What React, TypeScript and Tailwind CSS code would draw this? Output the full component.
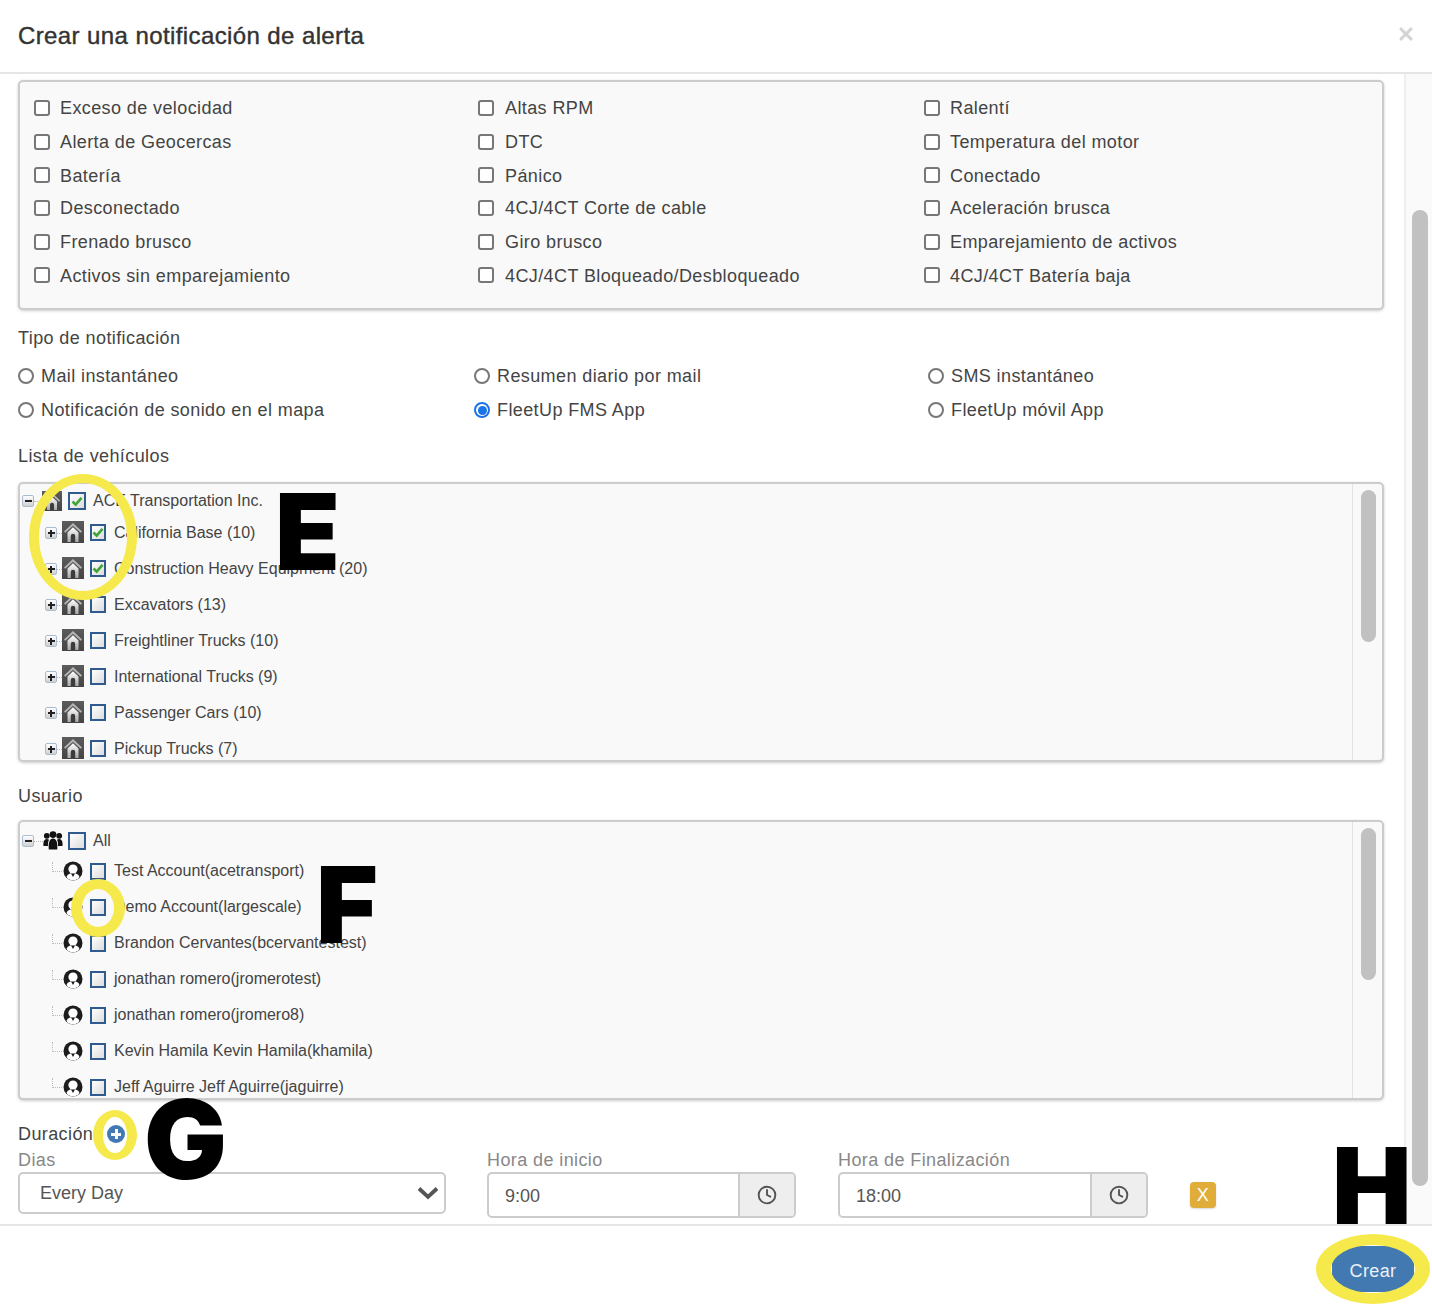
import { Clock, X } from "lucide-react";

const font = "font-['Liberation_Sans',Arial,sans-serif]";

const alertRows = [
  ["Exceso de velocidad", "Altas RPM", "Ralentí"],
  ["Alerta de Geocercas", "DTC", "Temperatura del motor"],
  ["Batería", "Pánico", "Conectado"],
  ["Desconectado", "4CJ/4CT Corte de cable", "Aceleración brusca"],
  ["Frenado brusco", "Giro brusco", "Emparejamiento de activos"],
  ["Activos sin emparejamiento", "4CJ/4CT Bloqueado/Desbloqueado", "4CJ/4CT Batería baja"],
];

const vehicles = [
  { label: "California Base (10)", checked: true },
  { label: "Construction Heavy Equipment (20)", checked: true },
  { label: "Excavators (13)", checked: false },
  { label: "Freightliner Trucks (10)", checked: false },
  { label: "International Trucks (9)", checked: false },
  { label: "Passenger Cars (10)", checked: false },
  { label: "Pickup Trucks (7)", checked: false },
];

const users = [
  "Test Account(acetransport)",
  "Demo Account(largescale)",
  "Brandon Cervantes(bcervantestest)",
  "jonathan romero(jromerotest)",
  "jonathan romero(jromero8)",
  "Kevin Hamila Kevin Hamila(khamila)",
  "Jeff Aguirre Jeff Aguirre(jaguirre)",
];

function AlertCheck({ label, column, raised }: { label: string; column: number; raised: boolean }) {
  return (
    <div className="flex items-center w-[445px]">
      <span
        className={`w-4 h-4 rounded-[3px] border-2 border-[#777] bg-white shrink-0 ${raised ? "-mt-[2px]" : ""} ${
          column === 1 ? "-ml-[1px] mr-[1px]" : ""
        }`}
      />
      <span className="ml-[10px]">{label}</span>
    </div>
  );
}

function Radio({ label, active, width }: { label: string; active?: boolean; width: string }) {
  return (
    <div className={`flex items-center h-[34px] ${width}`}>
      {active ? (
        <span className="w-4 h-4 rounded-full border-2 border-[#1a73e8] bg-white flex items-center justify-center shrink-0">
          <span className="w-[9px] h-[9px] rounded-full bg-[#1a73e8]" />
        </span>
      ) : (
        <span className="w-4 h-4 rounded-full border-2 border-[#777] bg-white shrink-0" />
      )}
      <span className="ml-[7px]">{label}</span>
    </div>
  );
}

function TreeCheck({ checked, large, className = "" }: { checked?: boolean; large?: boolean; className?: string }) {
  return (
    <span
      className={`flex items-center justify-center shrink-0 border-2 border-[#2f5b8f] bg-gradient-to-br from-white to-[#dcdcdc] ${
        large ? "w-[18px] h-[18px]" : "w-4 h-[17px]"
      } ${className}`}
    >
      {checked ? (
        <svg width="12" height="11" viewBox="0 0 12 11" fill="none">
          <path d="M1.500 5.500 4.700 8.700 10.500 1.800" stroke="#3fa535" strokeWidth="2.600" />
        </svg>
      ) : null}
    </span>
  );
}

function Toggle({ open }: { open?: boolean }) {
  return (
    <span className="relative w-3 h-3 shrink-0 rounded-[2px] border-[1.5px] border-[#a9bdd2] bg-gradient-to-b from-white to-[#d0d0d0]">
      <span className="absolute left-[1.5px] right-[1.5px] top-[3.5px] h-[2px] bg-[#222]" />
      {open ? null : <span className="absolute top-[1.5px] bottom-[1.5px] left-[3.5px] w-[2px] bg-[#222]" />}
    </span>
  );
}

function HouseIcon({ size = 22, className = "" }: { size?: number; className?: string }) {
  return (
    <svg width={size} height={size} viewBox="0 0 22 22" className={`shrink-0 ${className}`}>
      <defs>
        <linearGradient id="houseBg" x1="0" y1="0" x2="0" y2="1">
          <stop offset="0" stopColor="#5c5c5c" />
          <stop offset="1" stopColor="#444" />
        </linearGradient>
        <linearGradient id="houseBody" x1="0" y1="0" x2="0" y2="1">
          <stop offset="0" stopColor="#fff" />
          <stop offset="1" stopColor="#a8a8a8" />
        </linearGradient>
      </defs>
      <rect width="22" height="22" fill="url(#houseBg)" />
      <path d="M11 2 2 10.500l1.300 1.300L11 4.700l7.700 7.100 1.300-1.300Z" fill="#b5b5b5" />
      <path d="M5.500 11.500 11 6.200l5.500 5.300V21h-11Z" fill="url(#houseBody)" />
      <path d="M8.800 21v-6a2.200 2.200 0 0 1 4.400 0v6Z" fill="#3c3c3c" />
    </svg>
  );
}

function UserIcon() {
  return (
    <svg width="20" height="20" viewBox="0 0 20 20" className="shrink-0">
      <circle cx="10" cy="10" r="9.500" fill="#1c1c1c" />
      <circle cx="10" cy="8" r="4.600" fill="#fff" />
      <path d="M3.500 16c1-3 3.500-4 6.500-4s5.500 1 6.500 4a8 8 0 0 1-13 0Z" fill="#fff" />
      <path d="M8 12.500h4L10 16Z" fill="#1c1c1c" />
    </svg>
  );
}

function GroupIcon() {
  return (
    <svg width="20" height="20" viewBox="0 0 20 20" className="shrink-0">
      <g fill="#111">
        <circle cx="3.800" cy="4.800" r="2.900" />
        <circle cx="16.200" cy="4.800" r="2.900" />
        <circle cx="10" cy="3.600" r="3.400" />
        <path d="M.5 15c-.5-4 .6-7 3.300-7 1 0 1.700.2 2.200.7C5 10.500 4.800 13 5 15Z" />
        <path d="M19.500 15c.5-4-.6-7-3.300-7-1 0-1.700.2-2.200.7 1 1.800 1.200 4.300 1 6.300Z" />
        <path d="M5.800 18.500c-.7-7 .8-11 4.200-11s4.900 4 4.200 11Z" />
      </g>
    </svg>
  );
}

function TreeBox({ children }: { children: React.ReactNode }) {
  return (
    <div className="flex h-[280px] rounded-[5px] border-2 border-[#ccc] bg-[#f9f9f9] shadow-[0_1px_3px_rgba(0,0,0,0.2)] overflow-hidden">
      <div className="flex-1 overflow-hidden text-[16px] tracking-normal text-[#444]">{children}</div>
      <div className="w-[30px] shrink-0 border-l border-[#e3e3e3] pt-[6px] pl-2">
        <div className="w-[15px] h-[152px] rounded-full bg-[#c1c1c1]" />
      </div>
    </div>
  );
}

function TimeField({ label, value, width }: { label: string; value: string; width: string }) {
  return (
    <div className={width}>
      <div className="h-[23px] leading-[22px] text-[#888]">{label}</div>
      <div className="flex h-[46px] rounded-[5px] border-2 border-[#ccc] bg-white overflow-hidden">
        <div className="flex-1 pl-4 leading-[44px] tracking-normal text-[#555]">{value}</div>
        <div className="w-[56px] border-l-2 border-[#ccc] bg-[#eee] flex items-center justify-center">
          <Clock size={20} strokeWidth={2.300} className="text-[#555]" />
        </div>
      </div>
    </div>
  );
}

export default function App() {
  return (
    <div className={`${font} relative w-[1432px] h-[1310px] overflow-hidden bg-white text-[18px] tracking-[0.4px] text-[#444]`}>
      <header className="flex items-center justify-between h-[74px] pl-[18px] pr-[18px] border-b-2 border-[#e5e5e5]">
        <h1 className="text-[24px] font-normal text-[#333] [-webkit-text-stroke:0.4px_#333]">
          Crear una notificación de alerta
        </h1>
        <X size={20} strokeWidth={3.800} className="text-[#d4d4d4] -mt-[5px] -mr-[2px]" />
      </header>

      <div className="flex h-[1150px]">
        <main className="w-[1404px] shrink-0 overflow-hidden pl-[18px] pr-5 pt-[6px]">
          <section className="h-[230px] rounded-[5px] border-2 border-[#ccc] bg-[#f9f9f9] shadow-[0_1px_3px_rgba(0,0,0,0.2)] pl-[14px] pt-[9px]">
            {alertRows.map((row, rowIndex) => (
              <div key={row[0]} className={`flex items-center h-[34px] ${rowIndex === 3 ? "-mt-[2px]" : ""}`}>
                {row.map((item, column) => (
                  <AlertCheck key={item} label={item} column={column} raised={rowIndex === 2 || rowIndex === 5} />
                ))}
              </div>
            ))}
          </section>

          <h2 className="mt-[17px] h-[22px] leading-[22px] font-normal">Tipo de notificación</h2>
          <div className="mt-[10px] flex">
            <Radio label="Mail instantáneo" width="w-[456px]" />
            <Radio label="Resumen diario por mail" width="w-[454px]" />
            <Radio label="SMS instantáneo" width="w-[440px]" />
          </div>
          <div className="flex">
            <Radio label="Notificación de sonido en el mapa" width="w-[456px]" />
            <Radio label="FleetUp FMS App" active width="w-[454px]" />
            <Radio label="FleetUp móvil App" width="w-[440px]" />
          </div>

          <h2 className="mt-[18px] mb-[15px] h-[22px] leading-[22px] font-normal">Lista de vehículos</h2>
          <TreeBox>
            <div className="flex items-center h-[28px] mt-[3px] pl-[2px]">
              <Toggle open />
              <span className="w-[8px] border-t border-dotted border-[#bbb]" />
              <HouseIcon size={20} />
              <span className="w-[6px]" />
              <TreeCheck checked large />
              <span className="ml-[7px]">ACE Transportation Inc.</span>
            </div>
            {vehicles.map((v) => (
              <div key={v.label} className="flex items-center h-[36px] pl-[25px]">
                <Toggle />
                <span className="w-[5px] border-t border-dotted border-[#bbb]" />
                <HouseIcon className="-mt-[2px]" />
                <span className="w-[6px]" />
                <TreeCheck checked={v.checked} className="-mt-[1px]" />
                <span className="ml-[8px]">{v.label}</span>
              </div>
            ))}
          </TreeBox>

          <h2 className="mt-[23px] mb-[13px] h-[22px] leading-[22px] font-normal">Usuario</h2>
          <TreeBox>
            <div className="flex items-center h-[24px] mt-[7px] pl-[2px]">
              <Toggle open />
              <span className="w-[9px] border-t border-dotted border-[#bbb]" />
              <GroupIcon />
              <span className="w-[5px]" />
              <TreeCheck large />
              <span className="ml-[7px]">All</span>
            </div>
            {users.map((u) => (
              <div key={u} className="flex items-center h-[36px] pl-[32px]">
                <span className="w-[10px] h-[10px] -mt-[8px] border-l border-b border-dotted border-[#bbb]" />
                <span className="w-[1px]" />
                <UserIcon />
                <span className="w-[7px]" />
                <TreeCheck />
                <span className="ml-[8px]">{u}</span>
              </div>
            ))}
          </TreeBox>

          <div className="mt-[23px] flex items-center h-[22px]">
            <span>Duración</span>
            <span className="ml-[14px] flex items-center justify-center w-[18px] h-[18px] rounded-full bg-[#4279b5]">
              <span className="relative block w-[10px] h-[10px]">
                <span className="absolute left-0 right-0 top-[3.500px] h-[3px] bg-white" />
                <span className="absolute top-0 bottom-0 left-[3.500px] w-[3px] bg-white" />
              </span>
            </span>
          </div>
          <div className="flex items-start mt-[4px]">
            <div className="w-[428px]">
              <div className="h-[23px] leading-[22px] text-[#888]">Dias</div>
              <div className="flex items-center justify-between h-[42px] rounded-[5px] border-2 border-[#ccc] bg-white pl-5 pr-[5px] tracking-normal text-[#555]">
                <span>Every Day</span>
                <svg width="22" height="14" viewBox="0 0 22 14" fill="none">
                  <path d="M2 2.500 11 11l9-8.500" stroke="#555" strokeWidth="3.800" />
                </svg>
              </div>
            </div>
            <TimeField label="Hora de inicio" value="9:00" width="ml-[41px] w-[309px]" />
            <TimeField label="Hora de Finalización" value="18:00" width="ml-[42px] w-[310px]" />
            <button
              type="button"
              className="ml-[42px] mt-[33px] w-[26px] h-[26px] rounded-[4px] bg-[#e0ac3a] text-white shadow-[0_1px_2px_rgba(0,0,0,0.15)]"
            >
              X
            </button>
          </div>
        </main>

        <aside className="w-[28px] shrink-0 border-l-2 border-[#eee] bg-[#fafafa] pl-[6px] pt-[136px]">
          <div className="w-4 h-[976px] rounded-full bg-[#c1c1c1]" />
        </aside>
      </div>

      <footer className="flex justify-end h-[86px] border-t-2 border-[#e5e5e5] pt-[20px] pr-[18px]">
        <button type="button" className="w-[82px] h-[46px] pt-1 rounded-[4px] bg-[#4279b0] text-[#eaf1f8] text-[18px]">
          Crear
        </button>
      </footer>

      {/* annotations laid over the screenshot */}
      <span className="absolute left-[29px] top-[474px] w-[108px] h-[126px] rounded-[50%] border-x-[10px] border-y-[9px] border-[#f6e94c]" />
      <span className="absolute left-[71px] top-[879px] w-[54px] h-[58px] rounded-[50%] border-x-[11px] border-y-[10px] border-[#f6e94c]" />
      <span className="absolute left-[93px] top-[1110px] w-[44px] h-[50px] rounded-[50%] border-x-[10px] border-y-[7px] border-[#f6e94c]" />
      <span className="absolute left-[1316px] top-[1234px] w-[114px] h-[70px] rounded-[50%] border-x-[15px] border-y-[11px] border-[#f6e94c]" />
      <span className="absolute left-[275px] top-[467px] font-['Inter',sans-serif] font-black text-[106px] leading-[130px] tracking-normal text-black">E</span>
      <span className="absolute left-[316px] top-[840px] font-['Inter',sans-serif] font-black text-[106px] leading-[130px] tracking-normal text-black">F</span>
      <span className="absolute left-[144px] top-[1074px] font-['Inter',sans-serif] font-black text-[110px] leading-[130px] tracking-normal text-black">G</span>
      <span className="absolute left-[1332px] top-[1121px] font-['Inter',sans-serif] font-black text-[106px] leading-[130px] tracking-normal text-black">H</span>
    </div>
  );
}
